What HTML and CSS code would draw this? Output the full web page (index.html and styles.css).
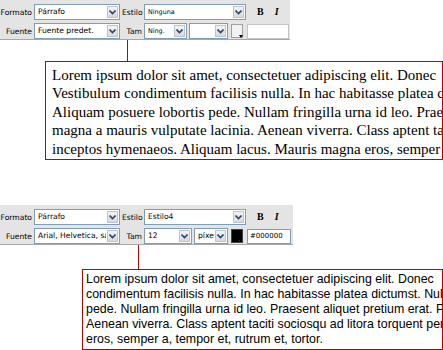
FILE: index.html
```html
<!DOCTYPE html>
<html lang="es">
  <head>
    <meta charset="utf-8" />
    <title>Editor</title>
    <link rel="stylesheet" href="styles.css">
  </head>
  <body>
    <div class="editor">
      <div class="toolbar">
        <span class="label">Formato</span>
        <div class="select">
          <span class="select__value">Párrafo</span>
          <span class="select__arrow"><svg width="7" height="5" viewBox="0 0 7 5"><path d="M0.5 0.5 L3.5 3.5 L6.5 0.5" fill="none" stroke="#31466e" stroke-width="1.6"/></svg></span>
        </div>
        <span class="label">Estilo</span>
        <div class="select">
          <span class="select__value select__value--small">Ninguna</span>
          <span class="select__arrow"><svg width="7" height="5" viewBox="0 0 7 5"><path d="M0.5 0.5 L3.5 3.5 L6.5 0.5" fill="none" stroke="#31466e" stroke-width="1.6"/></svg></span>
        </div>
        <div class="buttons">
          <span class="btn btn--bold">B</span>
          <span class="btn btn--italic">I</span>
        </div>

        <span class="label">Fuente</span>
        <div class="select">
          <span class="select__value">Fuente predet.</span>
          <span class="select__arrow"><svg width="7" height="5" viewBox="0 0 7 5"><path d="M0.5 0.5 L3.5 3.5 L6.5 0.5" fill="none" stroke="#31466e" stroke-width="1.6"/></svg></span>
        </div>
        <span class="label">Tam</span>
        <div class="toolbar__extras">
          <div class="select select--size">
            <span class="select__value select__value--small">Ning.</span>
            <span class="select__arrow"><svg width="7" height="5" viewBox="0 0 7 5"><path d="M0.5 0.5 L3.5 3.5 L6.5 0.5" fill="none" stroke="#31466e" stroke-width="1.6"/></svg></span>
          </div>
          <div class="select select--unit">
            <span class="select__value select__value--small"></span>
            <span class="select__arrow"><svg width="7" height="5" viewBox="0 0 7 5"><path d="M0.5 0.5 L3.5 3.5 L6.5 0.5" fill="none" stroke="#31466e" stroke-width="1.6"/></svg></span>
          </div>
          <span class="swatch swatch--empty"></span>
          <span class="color-input"></span>
        </div>
      </div>
      <div class="connector connector--first"></div>
      <div class="preview preview--serif">
        <div class="preview__line">Lorem ipsum dolor sit amet, consectetuer adipiscing elit. Donec</div>
        <div class="preview__line">Vestibulum condimentum facilisis nulla. In hac habitasse platea dictumst.</div>
        <div class="preview__line">Aliquam posuere lobortis pede. Nullam fringilla urna id leo. Praesent</div>
        <div class="preview__line">magna a mauris vulputate lacinia. Aenean viverra. Class aptent taciti</div>
        <div class="preview__line">inceptos hymenaeos. Aliquam lacus. Mauris magna eros, semper</div>
      </div>
    </div>

    <div class="editor editor--second">
      <div class="toolbar">
        <span class="label">Formato</span>
        <div class="select">
          <span class="select__value">Párrafo</span>
          <span class="select__arrow"><svg width="7" height="5" viewBox="0 0 7 5"><path d="M0.5 0.5 L3.5 3.5 L6.5 0.5" fill="none" stroke="#31466e" stroke-width="1.6"/></svg></span>
        </div>
        <span class="label">Estilo</span>
        <div class="select">
          <span class="select__value">Estilo4</span>
          <span class="select__arrow"><svg width="7" height="5" viewBox="0 0 7 5"><path d="M0.5 0.5 L3.5 3.5 L6.5 0.5" fill="none" stroke="#31466e" stroke-width="1.6"/></svg></span>
        </div>
        <div class="buttons">
          <span class="btn btn--bold">B</span>
          <span class="btn btn--italic">I</span>
        </div>

        <span class="label">Fuente</span>
        <div class="select">
          <span class="select__value">Arial, Helvetica, sans-serif</span>
          <span class="select__arrow"><svg width="7" height="5" viewBox="0 0 7 5"><path d="M0.5 0.5 L3.5 3.5 L6.5 0.5" fill="none" stroke="#31466e" stroke-width="1.6"/></svg></span>
        </div>
        <span class="label">Tam</span>
        <div class="toolbar__extras">
          <div class="select select--size2">
            <span class="select__value">12</span>
            <span class="select__arrow"><svg width="7" height="5" viewBox="0 0 7 5"><path d="M0.5 0.5 L3.5 3.5 L6.5 0.5" fill="none" stroke="#31466e" stroke-width="1.6"/></svg></span>
          </div>
          <div class="select select--unit2">
            <span class="select__value">píxeles</span>
            <span class="select__arrow"><svg width="7" height="5" viewBox="0 0 7 5"><path d="M0.5 0.5 L3.5 3.5 L6.5 0.5" fill="none" stroke="#31466e" stroke-width="1.6"/></svg></span>
          </div>
          <span class="swatch swatch--black"></span>
          <span class="color-input">#000000</span>
        </div>
      </div>
      <div class="connector connector--second"></div>
      <div class="preview preview--sans">
        <div class="preview__line">Lorem ipsum dolor sit amet, consectetuer adipiscing elit. Donec</div>
        <div class="preview__line">condimentum facilisis nulla. In hac habitasse platea dictumst. Nullam</div>
        <div class="preview__line">pede. Nullam fringilla urna id leo. Praesent aliquet pretium erat. Praesent</div>
        <div class="preview__line">Aenean viverra. Class aptent taciti sociosqu ad litora torquent per conubia</div>
        <div class="preview__line">eros, semper a, tempor et, rutrum et, tortor.</div>
      </div>
    </div>
  </body>
</html>
```

FILE: styles.css
```css
:root {
  --toolbar-bg: #e4e4e4;
  --toolbar-border: #a7a7a7;
  --field-border: #7f9db9;
  --preview-red: #c00000;
}

html,
body {
  margin: 0;
  padding: 0;
  background: #fff;
}

body {
  width: 443px;
  height: 350px;
  overflow: hidden;
  font-family: "DejaVu Sans", sans-serif;
  color: #000;
}

.editor--second {
  margin-top: 45px;
}

/* toolbar */
.toolbar {
  width: 290px;
  box-sizing: border-box;
  background: var(--toolbar-bg);
  border-bottom: 1px solid var(--toolbar-border);
  padding: 4px 0 0 0;
  display: grid;
  grid-template-columns: 32px 86px 20px 102px 1fr;
  column-gap: 2px;
  row-gap: 3px;
  align-items: center;
}
.editor--second .toolbar {
  width: 293px;
}
.label {
  font-size: 7.6px;
  text-align: right;
  white-space: nowrap;
  margin-left: -4px;
}
.label:nth-of-type(2),
.label:nth-of-type(4) {
  margin-left: 0;
}

.toolbar__extras {
  grid-column: 4 / 6;
  display: flex;
  align-items: center;
  gap: 2px;
}

.select {
  height: 16px;
  box-sizing: border-box;
  border: 1px solid var(--field-border);
  background: #fff;
  display: flex;
  align-items: stretch;
  overflow: hidden;
}
.select__value {
  flex: 1;
  min-width: 0;
  overflow: hidden;
  white-space: nowrap;
  font-size: 7.6px;
  line-height: 14px;
  padding-left: 3px;
}
.select__value--small {
  font-size: 6.4px;
}
.select__arrow {
  width: 11px;
  margin: 1px;
  box-sizing: border-box;
  border: 1px solid #b9c4d6;
  background: linear-gradient(#f4f4f4, #d6d9df);
  display: flex;
  align-items: center;
  justify-content: center;
}
.select--size {
  width: 43px;
}
.select--unit {
  width: 39px;
}
.select--size2 {
  width: 48px;
}
.select--unit2 {
  width: 34px;
}

.buttons {
  display: flex;
  gap: 11px;
  padding-left: 9px;
}
.btn {
  font-family: "Liberation Serif", serif;
  font-weight: bold;
  font-size: 10px;
  line-height: 12px;
}
.btn--italic {
  font-style: italic;
}

.swatch {
  position: relative;
  width: 12px;
  height: 14px;
  box-sizing: border-box;
  border: 1px solid #a0a0a0;
  margin-left: 1px;
}
.swatch--empty {
  background: #f2f2f2;
}
.swatch--black {
  background: #000;
  border-color: #444;
}
.swatch::after {
  content: "";
  position: absolute;
  right: -1px;
  bottom: -1px;
  width: 4px;
  height: 3px;
  background: #000;
  clip-path: polygon(0 0, 100% 0, 50% 100%);
}
.swatch--black::after {
  box-shadow: 0 0 0 1px #fff;
}

.color-input {
  width: 42px;
  height: 15px;
  box-sizing: border-box;
  border: 1px solid #c4c4c4;
  background: #fff;
  font-size: 7px;
  line-height: 13px;
  padding-left: 2px;
  margin-left: 2px;
}
.editor--second .color-input {
  border-color: var(--field-border);
  width: 44px;
}

/* preview boxes */
.connector {
  width: 1px;
  background: var(--preview-red);
}
.connector--first {
  height: 21px;
  margin-left: 127px;
}
.connector--second {
  height: 24px;
  margin-left: 138px;
}

.preview {
  border: 1px solid var(--preview-red);
  box-sizing: border-box;
  overflow: hidden;
}
.preview__line {
  white-space: nowrap;
}
.preview--serif {
  margin-left: 45px;
  width: 398px;
  padding: 4px 6px 1px;
  font-family: "Liberation Serif", serif;
  font-size: 15px;
  line-height: 18.4px;
}
.preview--sans {
  margin-left: 82px;
  width: 361px;
  padding: 2px 3px;
  font-family: "Liberation Sans", sans-serif;
  font-size: 12.4px;
  line-height: 15px;
}
```
